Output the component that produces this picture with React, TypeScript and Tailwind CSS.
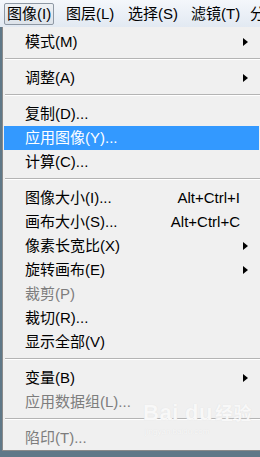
type Item =
  | { sep: true }
  | { sep?: false; label: string; shortcut?: string; sub?: boolean; disabled?: boolean; active?: boolean };

const items: Item[] = [
  { label: "模式(M)", sub: true },
  { sep: true },
  { label: "调整(A)", sub: true },
  { sep: true },
  { label: "复制(D)..." },
  { label: "应用图像(Y)...", active: true },
  { label: "计算(C)..." },
  { sep: true },
  { label: "图像大小(I)...", shortcut: "Alt+Ctrl+I" },
  { label: "画布大小(S)...", shortcut: "Alt+Ctrl+C" },
  { label: "像素长宽比(X)", sub: true },
  { label: "旋转画布(E)", sub: true },
  { label: "裁剪(P)", disabled: true },
  { label: "裁切(R)..." },
  { label: "显示全部(V)" },
  { sep: true },
  { label: "变量(B)", sub: true },
  { label: "应用数据组(L)...", disabled: true },
  { sep: true },
  { label: "陷印(T)...", disabled: true },
];

const menus = [
  { label: "图层(L)", w: "w-[62px]" },
  { label: "选择(S)", w: "w-[63px]" },
  { label: "滤镜(T)", w: "w-[59px]" },
  { label: "分", w: "w-[20px]" },
];

export default function App() {
  return (
    <div
      className="relative w-[260px] h-[457px] overflow-hidden bg-[#5f7888] text-[15px] text-black"
      style={{ fontFamily: '"Liberation Sans", "Noto Sans CJK SC", sans-serif' }}
    >
      {/* Menu bar */}
      <div className="h-[27px] flex items-start bg-gradient-to-b from-[#f4f7fb] to-[#e2e9f2] whitespace-nowrap">
        <div className="ml-[4px] w-[62px] shrink-0 pt-[3px]">
          <div className="inline-flex h-[22px] items-center px-[2px] rounded-[2px] border border-[#8e98a4] bg-gradient-to-b from-[#eef1f5] to-[#dde3ea]">
            图像(I)
          </div>
        </div>
        {menus.map((m) => (
          <div key={m.label} className={`${m.w} h-[28px] flex items-center shrink-0`}>
            {m.label}
          </div>
        ))}
      </div>

      {/* Dropdown */}
      <div className="ml-[2px] w-[262px] h-[424px] border-l border-b border-[#8a8a8a] bg-[#f0f0f0] pt-[3px]">
        {items.map((it, i) =>
          it.sep ? (
            <div key={i} className="h-[12px] pt-[4px] mx-[2px]">
              <div className="h-px bg-[#b4b4b4]" />
              <div className="h-px bg-white" />
            </div>
          ) : (
            <div
              key={i}
              className={`h-[24px] flex items-center pl-[21px] ml-px mr-[5px] whitespace-nowrap ${
                it.active ? "bg-[#3399ff] text-white" : it.disabled ? "text-[#7d7d7d]" : ""
              }`}
            >
              <span>{it.label}</span>
              {it.shortcut && <span className="ml-auto mr-[19px]">{it.shortcut}</span>}
              {it.sub && (
                <span className="ml-auto mr-[11px] w-0 h-0 border-y-[4px] border-y-transparent border-l-[5px] border-l-black" />
              )}
            </div>
          )
        )}
      </div>

      {/* Watermark */}
      <div className="absolute left-[143px] top-[402px] text-[#f8f8f8] leading-none pointer-events-none [text-shadow:0_0_1px_#dcdcdc]">
        <div className="text-[22px] font-bold tracking-wide">Bai<span className="ml-[6px]">du</span><span className="ml-[2px] text-[18px]">经验</span></div>
        <div className="text-[8px] mt-[4px] ml-[2px]">jingyan.baidu.com</div>
      </div>
    </div>
  );
}
